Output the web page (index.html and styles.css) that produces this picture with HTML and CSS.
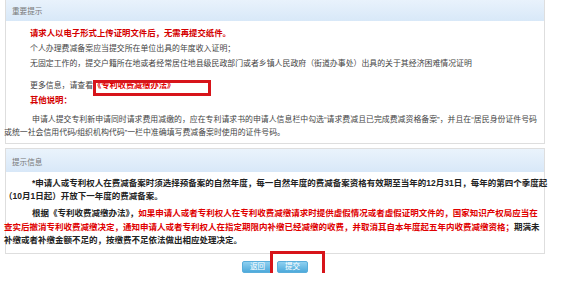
FILE: index.html
```html
<!DOCTYPE html>
<html lang="zh-CN">
<head>
    <meta charset="UTF-8">
    <title>费减备案提示</title>
    <link rel="stylesheet" href="styles.css">
</head>
<body>

    <div class="page">
        <div class="panel panel-first">
            <div class="panel-title">重要提示</div>
            <div class="panel-body">
                <p class="line warn">请求人以电子形式上传证明文件后，无需再提交纸件。</p>
                <p class="line">个人办理费减备案应当提交所在单位出具的年度收入证明；</p>
                <p class="line">无固定工作的，提交户籍所在地或者经常居住地县级民政部门或者乡镇人民政府（街道办事处）出具的关于其经济困难情况证明</p>
                <p class="line more">更多信息，请查看<a class="law-link" href="#">《专利收费减缴办法》</a></p>
                <p class="line warn">其他说明：</p>
                <p class="para">申请人提交专利新申请同时请求费用减缴的，应在专利请求书的申请人信息栏中勾选“请求费减且已完成费减资格备案”，并且在“居民身份证件号码<br>或统一社会信用代码/组织机构代码”一栏中准确填写费减备案时使用的证件号码。</p>
            </div>
        </div>

        <div class="panel">
            <div class="panel-title">提示信息</div>
            <div class="panel-body notice">
                <p class="para">*申请人或专利权人在费减备案时须选择预备案的自然年度，每一自然年度的费减备案资格有效期至当年的12月31日，每年的第四个季度起<br>（10月1日起）开放下一年度的费减备案。</p>
                <p class="para">根据《专利收费减缴办法》，<span class="red">如果申请人或者专利权人在专利收费减缴请求时提供虚假情况或者虚假证明文件的，国家知识产权局应当在<br>查实后撤消专利收费减缴决定，通知申请人或者专利权人在指定期限内补缴已经减缴的收费，并取消其自本年度起五年内收费减缴资格；</span>期满未<br>补缴或者补缴金额不足的，按缴费不足依法做出相应处理决定。</p>
            </div>
        </div>

        <div class="actions">
            <button class="btn">返回</button>
            <span class="marked-btn"><button class="btn">提交</button></span>
        </div>
    </div>

</body>
</html>
```

FILE: styles.css
```css
body {
    margin: 0;
    background-color: #fff;
    font-family: "Liberation Sans", "Noto Sans CJK SC", sans-serif;
    color: #444;
}

.page {
    width: 540px;
    margin-left: 5px;
}

.panel {
    border: 1px solid #dedede;
    margin-bottom: 4px;
}

.panel-first {
    margin-top: -3px;
}

.panel-title {
    height: 18px;
    padding: 5px 0 0 6px;
    line-height: 18px;
    font-size: 7.6px;
    color: #777;
    background: linear-gradient(#eaf3fc, #d8e8f8);
}

.panel-body {
    padding: 5px 0 3.5px 0;
    font-size: 7.9px;
}

.panel-body p {
    margin: 0;
    white-space: nowrap;
}

.line {
    line-height: 15px;
    padding-left: 24px;
}

.line.more {
    padding-top: 7px;
}

.warn {
    color: #d40000;
    font-weight: bold;
    font-size: 8.4px;
}

.law-link {
    position: relative;
    color: #e00000;
    font-weight: bold;
    font-size: 8.2px;
    text-decoration: none;
}

.law-link::after {
    content: "";
    position: absolute;
    left: 0;
    right: -36px;
    top: -1px;
    bottom: -6px;
    border: 3px solid #d7141a;
}

.para {
    margin-left: -2px !important;
    text-indent: 28px;
    line-height: 13px;
}

.panel-body .para + .para {
    margin-top: 3.5px;
}

.line + .para {
    margin-top: 5px !important;
}

.notice {
    padding: 5px 0 5px 0;
    font-size: 8.5px;
    font-weight: bold;
    color: #222;
}

.notice .para {
    line-height: 13.5px;
}

.red {
    color: #e00000;
}

.actions {
    display: flex;
    justify-content: center;
    gap: 4px;
    margin-top: 7px;
}

.btn {
    width: 31px;
    height: 12px;
    padding: 0;
    font-family: "Liberation Sans", "Noto Sans CJK SC", sans-serif;
    font-size: 7.5px;
    line-height: 10px;
    color: #fff;
    background: linear-gradient(#8fd0f0, #4eaadb);
    border: 1px solid #5aaedb;
    border-radius: 2px;
}

.marked-btn {
    position: relative;
    display: flex;
}

.marked-btn::after {
    content: "";
    position: absolute;
    left: -7px;
    right: -17px;
    top: -10px;
    bottom: -15px;
    border: 3px solid #d7141a;
}
```
